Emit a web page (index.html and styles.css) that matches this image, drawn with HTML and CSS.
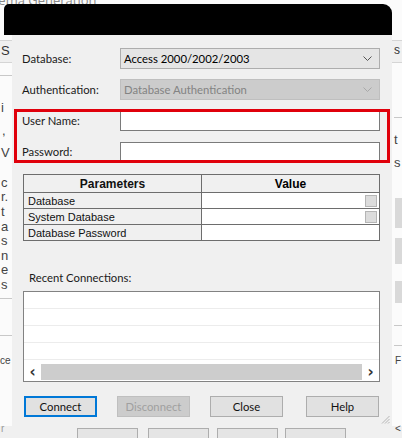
FILE: index.html
```html
<!DOCTYPE html>
<html>
<head>
<meta charset="utf-8">
<meta name="viewport" content="width=device-width, initial-scale=1">
<link rel="stylesheet" href="styles.css">
</head>
<body>

<!-- window behind the dialog -->
<div class="backdrop">
  <div class="bg-title">Schema Generation</div>
  <div class="bg-band bg-band-top"><span class="bg-s">S</span><span class="bg-s2">s</span></div>
  <div class="bg-line" style="top: 75px; left: 0; width: 12px;"></div>
  <div class="bg-line" style="top: 117px; left: 394px; width: 8px;"></div>
  <span class="bg-frag" style="top: 101px; left: 1px;">i</span>
  <span class="bg-frag" style="top: 124px; left: 2px;">,</span>
  <span class="bg-frag" style="top: 146px; left: 1px;">V</span>
  <span class="bg-frag" style="top: 176px; left: 1px;">c</span>
  <span class="bg-frag" style="top: 190px; left: 1px;">r.</span>
  <span class="bg-frag" style="top: 205px; left: 1px;">t</span>
  <span class="bg-frag" style="top: 220px; left: 1px;">a</span>
  <span class="bg-frag" style="top: 234px; left: 1px;">s</span>
  <span class="bg-frag" style="top: 249px; left: 1px;">n</span>
  <span class="bg-frag" style="top: 263px; left: 1px;">e</span>
  <span class="bg-frag" style="top: 278px; left: 1px;">s</span>
  <div class="bg-line" style="top: 298px; left: 0; width: 12px;"></div>
  <div class="bg-line" style="top: 335px; left: 0; width: 12px;"></div>
  <span class="bg-frag bg-frag-small" style="top: 355px; left: 0;">ce</span>
  <span class="bg-frag" style="top: 133px; left: 394px;">t</span>
  <span class="bg-frag" style="top: 156px; left: 394px;">s</span>
  <div class="bg-btn" style="top: 198px; left: 395px; height: 30px;"></div>
  <div class="bg-btn" style="top: 238px; left: 395px; height: 26px;"></div>
  <div class="bg-btn" style="top: 281px; left: 395px; height: 22px;"></div>
  <div class="bg-line" style="top: 325px; left: 394px; width: 8px;"></div>
  <div class="bg-line" style="top: 345px; left: 394px; width: 8px;"></div>
  <span class="bg-frag bg-frag-small" style="top: 355px; left: 395px;">F</span>
  <div class="bg-bottom">
    <div class="bg-bottom-btn" style="left: 77px;"></div>
    <div class="bg-bottom-btn" style="left: 148px;"></div>
    <div class="bg-bottom-btn" style="left: 217px;"></div>
    <div class="bg-bottom-btn" style="left: 285px;"></div>
  </div>
  <span class="bg-frag bg-frag-small" style="top: 423px; left: 395px;">&lt;</span>
  <span class="bg-frag bg-frag-gray bg-frag-small" style="top: 423px; left: 1px;">r</span>
</div>

<div class="window">
  <div class="titlebar"></div>

  <div class="dialog">
    <div class="field-row">
      <div class="field-label">Database:</div>
      <div class="combo">
        <span>Access 2000/2002/2003</span>
        <svg class="chevron" width="9" height="5" viewBox="0 0 9 5"><polyline points="0.5,0.5 4.5,4.5 8.5,0.5" fill="none" stroke="#555" stroke-width="1"/></svg>
      </div>
    </div>
    <div class="field-row">
      <div class="field-label">Authentication:</div>
      <div class="combo combo-disabled">
        <span>Database Authentication</span>
        <svg class="chevron" width="9" height="5" viewBox="0 0 9 5"><polyline points="0.5,0.5 4.5,4.5 8.5,0.5" fill="none" stroke="#a8a8a8" stroke-width="1"/></svg>
      </div>
    </div>
    <div class="field-row">
      <div class="field-label">User Name:</div>
      <div class="textbox"></div>
    </div>
    <div class="field-row">
      <div class="field-label">Password:</div>
      <div class="textbox"></div>
    </div>

    <table class="params">
      <tr>
        <th class="col-name">Parameters</th>
        <th>Value</th>
      </tr>
      <tr>
        <td class="col-name">Database</td>
        <td class="col-value"><span class="check-btn"></span></td>
      </tr>
      <tr>
        <td class="col-name">System Database</td>
        <td class="col-value"><span class="check-btn"></span></td>
      </tr>
      <tr>
        <td class="col-name">Database Password</td>
        <td class="col-value"></td>
      </tr>
    </table>

    <div class="recent-label">Recent Connections:</div>
    <div class="recent-list">
      <div class="list-row"></div>
      <div class="list-row"></div>
      <div class="list-row"></div>
      <div class="list-row"></div>
      <div class="hscroll">
        <span class="scroll-arrow">&lsaquo;</span>
        <div class="scroll-track"></div>
        <span class="scroll-arrow">&rsaquo;</span>
      </div>
    </div>

    <div class="button-row">
      <div class="btn btn-default">Connect</div>
      <div class="btn btn-disabled">Disconnect</div>
      <div class="btn">Close</div>
      <div class="btn btn-help">Help</div>
    </div>

    <svg class="grip" width="9" height="9" viewBox="0 0 9 9">
      <line x1="8.5" y1="1" x2="1" y2="8.5" stroke="#b5b5b5"/>
      <line x1="8.5" y1="4" x2="4" y2="8.5" stroke="#b5b5b5"/>
      <line x1="8.5" y1="7" x2="7" y2="8.5" stroke="#b5b5b5"/>
    </svg>

    <!-- red annotation drawn over the credentials -->
    <div class="highlight-box"></div>
  </div>
</div>

</body>
</html>
```

FILE: styles.css
```css
body {
  margin: 0;
  width: 402px;
  height: 438px;
  overflow: hidden;
  position: relative;
  background-color: #fbfbfb;
  font-family: "Liberation Sans", Arial, sans-serif;
  font-size: 12px;
  color: #000;
}

/* ---- background window ---- */

.backdrop {
  position: absolute;
  left: 0;
  top: 0;
  width: 402px;
  height: 438px;
}

.bg-title {
  position: absolute;
  top: -9px;
  left: -23px;
  font-family: "Open Sans", sans-serif;
  font-size: 13px;
  color: #8a8a8a;
}

.bg-band {
  position: absolute;
  left: 0;
  width: 402px;
  background-color: #f0f0f0;
  border-top: 1px solid #d5d5d5;
  border-bottom: 1px solid #d5d5d5;
}

.bg-band-top {
  top: 40px;
  height: 21px;
}

.bg-s {
  position: absolute;
  left: 1px;
  top: 2px;
  font-size: 13px;
  color: #333;
}

.bg-s2 {
  position: absolute;
  left: 394px;
  top: 2px;
  font-size: 12px;
  color: #333;
}

.bg-line {
  position: absolute;
  height: 1px;
  background-color: #c8c8c8;
}

.bg-frag {
  position: absolute;
  font-size: 13px;
  line-height: 14px;
  color: #444;
}

.bg-frag-small {
  font-size: 10px;
  line-height: 12px;
}

.bg-frag-gray {
  color: #999;
}

.bg-btn {
  position: absolute;
  width: 8px;
  background-color: #d9d9d9;
}

.bg-bottom {
  position: absolute;
  left: 0;
  top: 426px;
  width: 402px;
  height: 12px;
  background-color: #f0f0f0;
}

.bg-bottom-btn {
  position: absolute;
  top: 2px;
  width: 59px;
  height: 14px;
  background-color: #e5e5e5;
  border: 1px solid #adadad;
}

/* ---- dialog ---- */

.window {
  position: absolute;
  left: 4px;
  top: 4px;
  width: 388px;
}

.titlebar {
  height: 31px;
  background-color: #000;
  border-radius: 5px 9px 0 0;
}

.dialog {
  position: relative;
  box-sizing: border-box;
  margin-left: 8px;
  width: 380px;
  height: 391px;
  padding: 13px 12px 0 10px;
  background-color: #f0f0f0;
  font-family: Lato, "Liberation Sans", sans-serif;
  font-size: 11.3px;
}

.field-row {
  display: flex;
  align-items: center;
  height: 21px;
  margin-bottom: 10px;
}

.field-label {
  width: 98px;
  flex-shrink: 0;
  color: #1a1a1a;
}

.combo {
  box-sizing: border-box;
  display: flex;
  align-items: center;
  justify-content: space-between;
  width: 260px;
  height: 21px;
  padding: 0 4px 0 3px;
  background-color: #e5e5e5;
  border: 1px solid #adadad;
}

.combo-disabled {
  background-color: #cccccc;
  border-color: #bfbfbf;
  color: #838383;
}

.chevron {
  margin-right: 3px;
}

.textbox {
  box-sizing: border-box;
  width: 260px;
  height: 20px;
  background-color: #fff;
  border: 1px solid #7a7a7a;
}

/* ---- parameters grid ---- */

.params {
  margin: 12px 0 0 1px;
  width: 357px;
  border-collapse: collapse;
  font-family: "Liberation Sans", Arial, sans-serif;
  font-size: 11px;
}

.params th,
.params td {
  border: 1px solid #6d6d6d;
  padding: 0 4px;
}

.params th {
  height: 17px;
  font-size: 12px;
  font-weight: bold;
  text-align: center;
  background-color: #f0f0f0;
}

.params td {
  height: 15px;
  line-height: 14px;
}

.params .col-name {
  width: 169px;
  background-color: #f0f0f0;
  color: #111;
}

.params .col-value {
  background-color: #fff;
  text-align: right;
  padding-right: 2px;
}

.check-btn {
  display: inline-block;
  box-sizing: border-box;
  width: 12px;
  height: 12px;
  margin-top: 1px;
  vertical-align: top;
  background-color: #dcdcdc;
  border: 1px solid #b5b5b5;
}

/* ---- recent connections ---- */

.recent-label {
  margin: 30px 0 6px 7px;
  height: 14px;
  line-height: 14px;
  color: #1a1a1a;
}

.recent-list {
  box-sizing: border-box;
  margin-left: 1px;
  width: 357px;
  height: 91px;
  background-color: #fff;
  border: 1px solid #828282;
}

.list-row {
  height: 16px;
  border-bottom: 1px solid #ececec;
}

.hscroll {
  display: flex;
  align-items: center;
  height: 16px;
  margin-top: 4px;
}

.scroll-arrow {
  width: 17px;
  text-align: center;
  font-family: "DejaVu Sans", sans-serif;
  font-size: 15px;
  font-weight: bold;
  line-height: 14px;
  color: #333;
}

.scroll-track {
  flex: 1;
  height: 16px;
  background-color: #cdcdcd;
}

/* ---- buttons ---- */

.button-row {
  display: flex;
  margin: 14px 0 0 2px;
}

.btn {
  box-sizing: border-box;
  width: 73px;
  height: 21px;
  margin-right: 20px;
  line-height: 19px;
  text-align: center;
  background-color: #e1e1e1;
  border: 1px solid #adadad;
  color: #111;
}

.btn-default {
  border: 2px solid #0078d7;
  line-height: 17px;
}

.btn-disabled {
  background-color: #cccccc;
  border-color: #bfbfbf;
  color: #a0a0a0;
}

.btn-help {
  margin-left: 3px;
  margin-right: 0;
}

.grip {
  position: absolute;
  right: 2px;
  bottom: 2px;
}

.highlight-box {
  position: absolute;
  left: 2px;
  top: 74px;
  box-sizing: border-box;
  width: 376px;
  height: 54px;
  border: 3px solid #e0000b;
}
```
